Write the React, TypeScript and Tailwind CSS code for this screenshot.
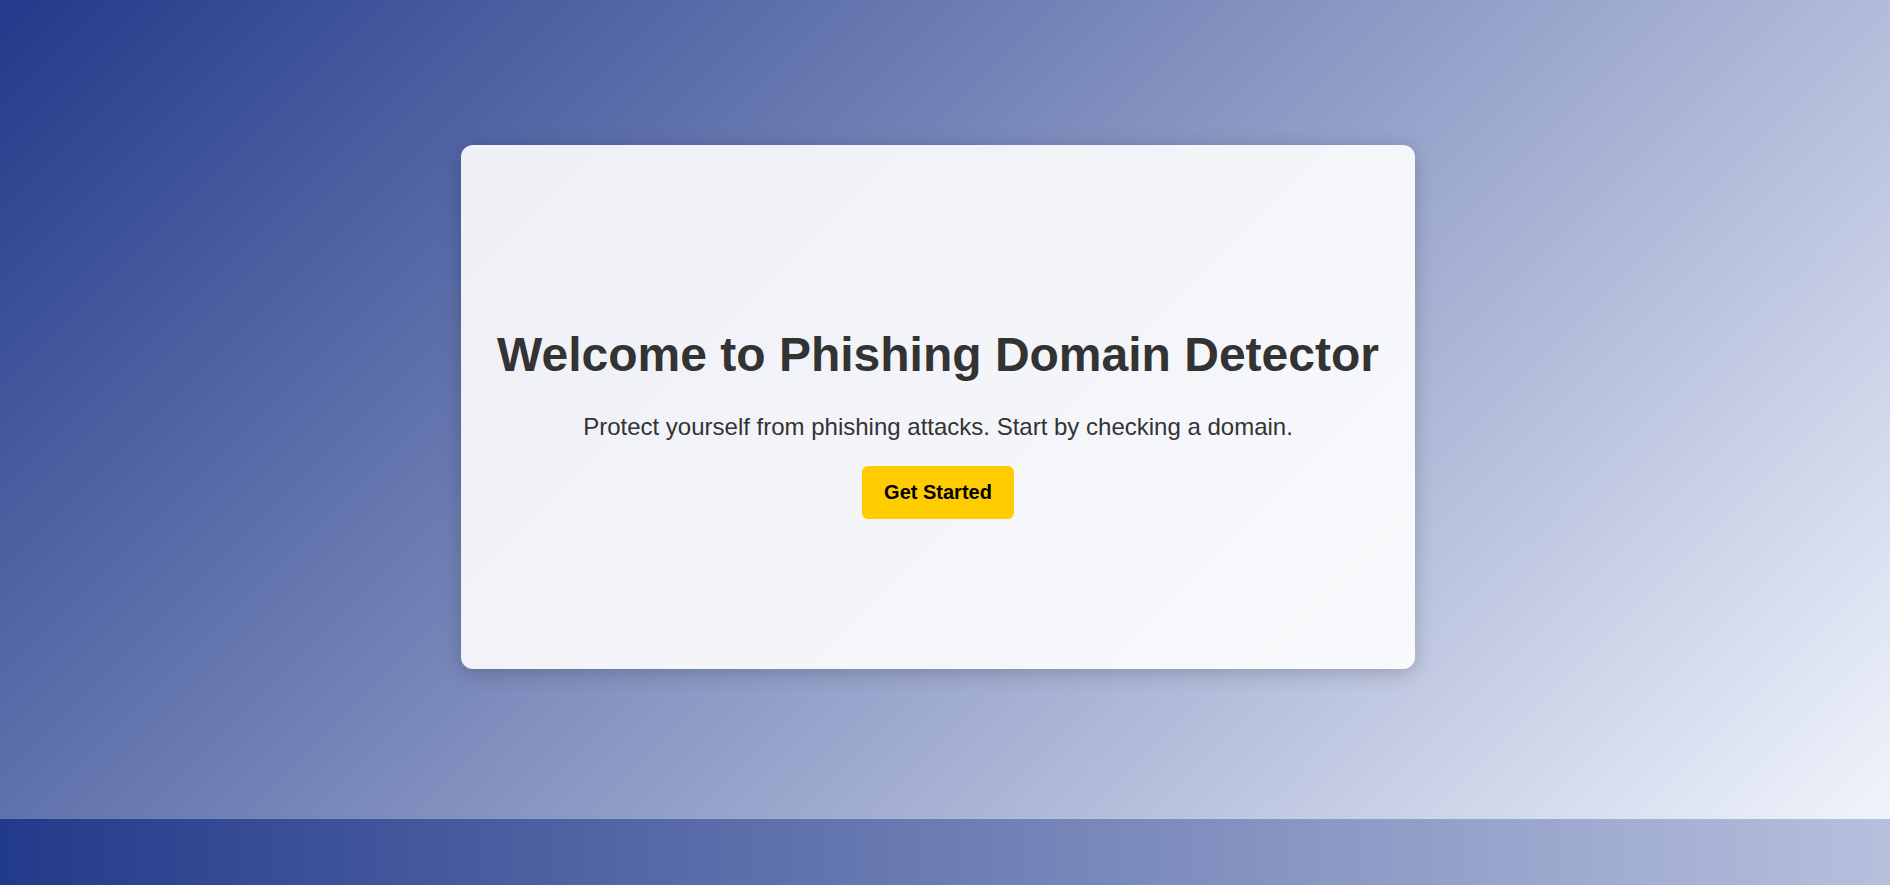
const App = () => {
    return (
        <div className="min-h-screen w-full font-['Liberation_Sans',Arial,sans-serif] text-[#333333]">
            <main className="h-[819px] w-full bg-[linear-gradient(135deg,#223a8a,#f0f4fc)] pt-[145px] pr-[14px] flex justify-center items-start">
                <section className="w-[954px] h-[524px] flex flex-col items-center pt-[182px] rounded-xl bg-white/90 shadow-[0_4px_20px_rgba(0,0,0,0.2)]">
                    <h1 className="text-[48px] leading-[55px] font-bold text-center">
                        Welcome to Phishing Domain Detector
                    </h1>
                    <p className="mt-[31px] text-[24px] leading-[28px] text-center">
                        Protect yourself from phishing attacks. Start by checking a domain.
                    </p>
                    <button
                        type="button"
                        className="mt-[25px] px-[22px] py-[15px] rounded-md bg-[#ffcc00] text-black text-[20px] leading-[23px] font-bold hover:bg-[#e6b800]"
                        onClick={() => {}}
                    >
                        Get Started
                    </button>
                </section>
            </main>
            <footer className="h-[66px] w-full bg-[linear-gradient(to_right,#223a8a,#b6c0dd)]" />
        </div>
    );
};

export default App;
